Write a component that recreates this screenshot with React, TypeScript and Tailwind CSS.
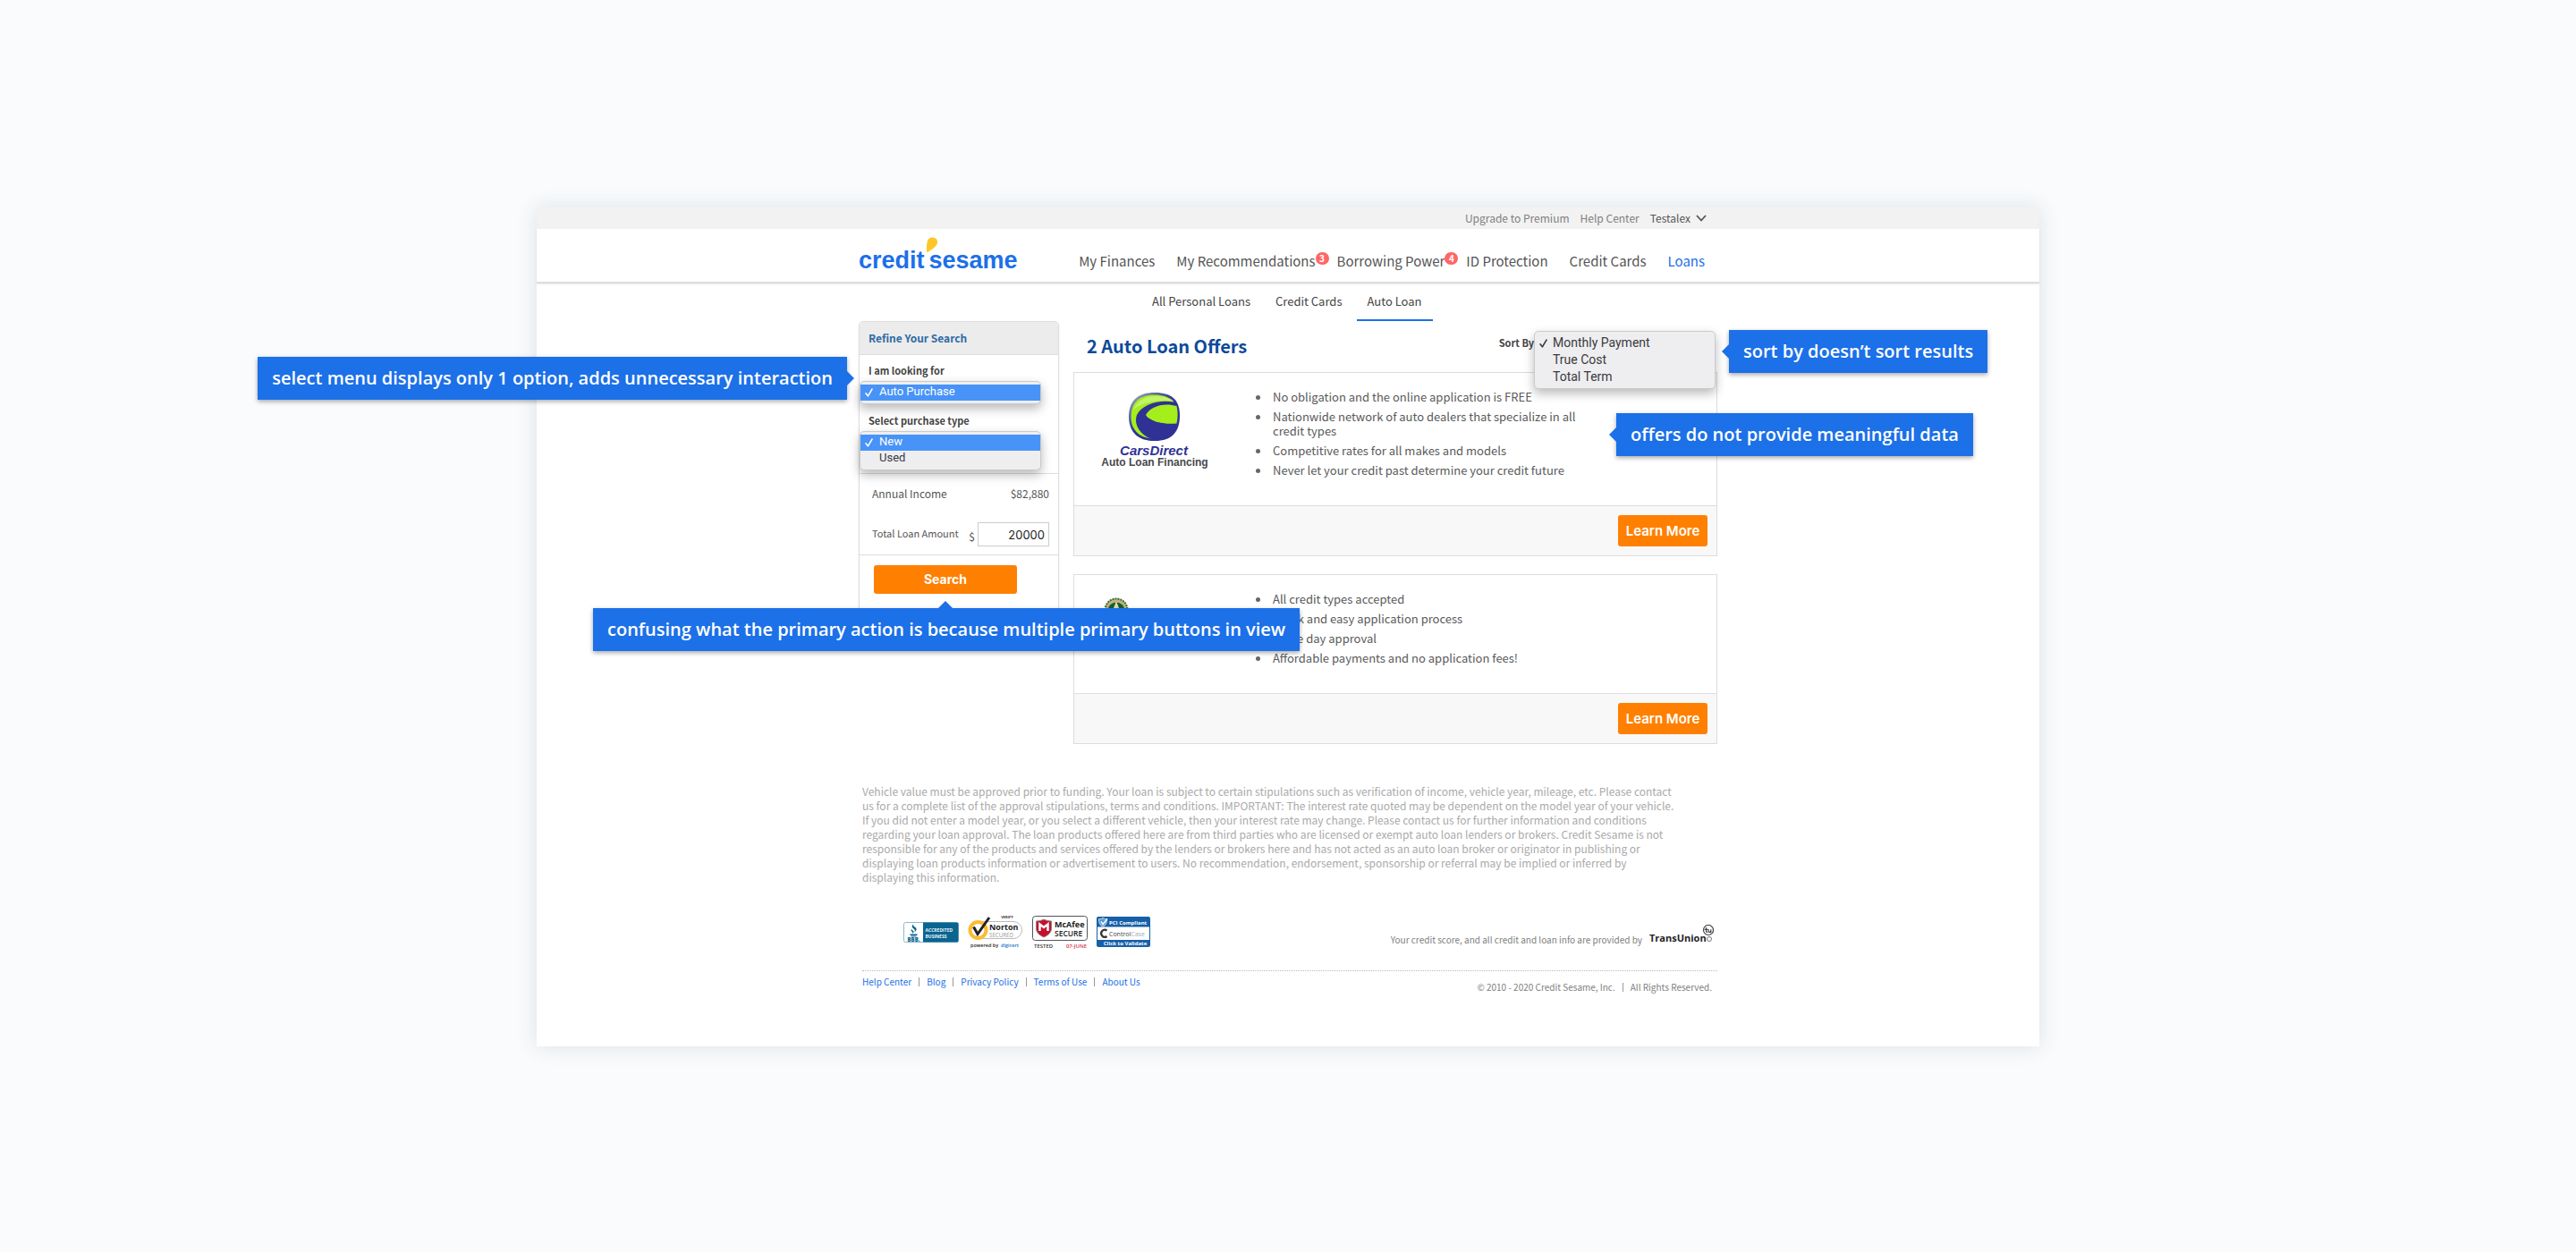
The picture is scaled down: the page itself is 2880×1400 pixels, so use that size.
import type { ReactNode } from "react";

function Callout({
  children,
  place,
  arrow,
}: {
  children: ReactNode;
  place: string;
  arrow: "left" | "right" | "top";
}) {
  const arrows = {
    left: "right-full top-4 h-4 w-2 [clip-path:polygon(100%_0,0_50%,100%_100%)]",
    right: "left-full top-4 h-4 w-2 [clip-path:polygon(0_0,100%_50%,0_100%)]",
    top: "bottom-full left-[386px] h-2 w-4 [clip-path:polygon(0_100%,50%_0,100%_100%)]",
  };
  return (
    <p
      role="note"
      className={`absolute z-20 whitespace-nowrap bg-[#1c70e8] px-4 font-['Open_Sans',sans-serif] text-xl/12 font-semibold text-white shadow-[0_2px_5px_rgba(0,0,0,0.35)] ${place}`}
    >
      {children}
      <span className={`absolute bg-[#1c70e8] ${arrows[arrow]}`} />
    </p>
  );
}

function Check({ className }: { className: string }) {
  return (
    <svg viewBox="0 0 9 10" className={`pointer-events-none absolute h-[10px] w-[9px] ${className}`} aria-hidden="true">
      <path d="M1 5.8 3.4 8.8 8 1.2" fill="none" stroke="currentColor" strokeWidth="1.6" strokeLinecap="round" strokeLinejoin="round" />
    </svg>
  );
}

const menuBox =
  "rounded-[5px] border border-[#c9cacc] bg-[#eeeef1] text-[#3a3a3c] shadow-[0_5px_12px_rgba(0,0,0,0.28)]";

function SideMenu({ id, options, list }: { id: string; options: string[]; list: string }) {
  return (
    <div className={`relative w-[203px] py-[3px] ${menuBox}`}>
      <select
        id={id}
        size={2}
        defaultValue={options[0]}
        className={`block w-full appearance-none overflow-hidden border-0 bg-transparent p-0 font-[Roboto,sans-serif] text-[13px] outline-none ${list}`}
      >
        {options.map((o) => (
          <option
            key={o}
            value={o}
            className="block h-[18px] p-0 pl-[21px] leading-[18px] checked:bg-linear-to-r checked:from-[#4893f8] checked:to-[#4893f8] checked:[-webkit-text-fill-color:white]"
          >
            {o}
          </option>
        ))}
      </select>
      <Check className="left-[5px] top-[7px] text-white" />
    </div>
  );
}

function CreditSesameLogo() {
  return (
    <a href="#" className="relative flex items-center gap-[5px] font-['Liberation_Sans',sans-serif] text-[27px] leading-8 font-bold text-[#1c70e8]">
      <span>credit</span>
      <span>sesame</span>
      <svg viewBox="0 0 14 18" className="absolute -top-[10px] left-[75px] h-[18px] w-[14px]" aria-hidden="true">
        <path d="M1.2 17.2C.8 12.600.9 7.500 2 4.300 3 1.600 5.200.4 7.800.6c3.200.2 5.400 2.300 5.300 5.300C13 9.500 7 14.300 1.200 17.200Z" fill="#ffc629" />
      </svg>
    </a>
  );
}

function CarsDirectLogo() {
  return (
    <svg viewBox="0 0 120 88" className="h-[88px] w-[120px]" role="img" aria-label="CarsDirect Auto Loan Financing">
      <defs>
        <linearGradient id="rim" x1="0" y1="0" x2="0.7" y2="0.8">
          <stop offset="0" stopColor="#b5bcc8" />
          <stop offset="0.35" stopColor="#5a66a0" />
          <stop offset="0.65" stopColor="#2f3294" />
        </linearGradient>
      </defs>
      <path d="M60 3C80 3 88 12 88 29C88 47 79 57 60 57C41 57 31 47 31 30C31 12 41 3 60 3Z" fill="url(#rim)" />
      <path d="M60 5.500C77 5.500 85.500 14 85.500 29C85.500 45 77 54.500 60 54.500C43 54.500 33.500 45 33.500 30C33.500 14 43 5.500 60 5.500Z" fill="#a4ee1c" />
      <path d="M83 14C66 10 46 16 40 28C36 39 44 51 58 55.500C76 56 87 46 87 29L86 20Z" fill="#2f3294" />
      <path d="M84.500 18C70 13.500 54 19 50 28C54 35 70 39 84.500 37.500C86 31 86 24 84.500 18Z" fill="#a4ee1c" />
      <path d="M36 22C40 12 50 7 61 7C72 7 80 10 82 13C64 10 46 14 36 22Z" fill="#d9f5a0" opacity="0.6" />
      <text x="59" y="73" textAnchor="middle" fill="#2f3294" fontFamily="Liberation Sans" fontSize="15" fontStyle="italic" fontWeight="700">
        CarsDirect
      </text>
      <text x="60" y="85" textAnchor="middle" fill="#484848" fontFamily="Liberation Sans" fontSize="12" fontWeight="700">
        Auto Loan Financing
      </text>
    </svg>
  );
}

function SealLogo() {
  return (
    <svg viewBox="0 0 28 28" className="h-7 w-7" role="img" aria-label="Lender seal">
      <circle cx="14" cy="14" r="12.500" fill="#c9b273" stroke="#2c6b45" strokeWidth="2" strokeDasharray="2 1" />
      <circle cx="14" cy="15" r="9.500" fill="#12613a" />
      <path d="M14 5 7 24h4l2-12h2l2 12h4Z" fill="#f4f1e4" />
      <path d="M14 4.500 17 12h-6Z" fill="#e6d9a8" />
    </svg>
  );
}

function OfferCard({ logo, points, children }: { logo: ReactNode; points: string[]; children?: ReactNode }) {
  return (
    <article className="relative border border-[#ddd] bg-white">
      <div className="flex pt-[19px] pb-[31px]">
        <div className="h-px w-[203px] shrink-0 pl-[30px]">{logo}</div>
        <ul className="flex max-w-[372px] flex-col gap-1.5 text-[13px] leading-4 text-[#5a5a5a]">
          {points.map((p) => (
            <li key={p} className="flex gap-[14px]">
              <span className="mt-[6px] h-[5px] w-[5px] shrink-0 rounded-full bg-[#666]" />
              <span>{p}</span>
            </li>
          ))}
        </ul>
      </div>
      <div className="flex h-14 items-center justify-end border-t border-[#ddd] bg-[#f8f8f8] pr-[10px]">
        <button type="button" className="h-[35px] w-[100px] rounded-[3px] bg-[#ff8000] pt-0.5 font-[Inter,sans-serif] text-[15px] font-semibold text-white">
          Learn More
        </button>
      </div>
      {children}
    </article>
  );
}

function TrustBadges() {
  const f = "Open Sans";
  return (
    <div className="flex items-center gap-[10px]">
      <svg viewBox="0 0 62 23" className="h-[23px] w-[62px]" role="img" aria-label="BBB Accredited Business">
        <rect x="0.500" y="0.500" width="61" height="22" rx="2" fill="#fff" stroke="#8fb9cc" />
        <path d="M22 .5h38a1.500 1.500 0 0 1 1.500 1.500v19a1.500 1.500 0 0 1-1.500 1.500H22Z" fill="#0a6490" />
        <path d="M11 2.500c-3 3 0 4.500 1.500 6 .8 1 .3 2-.6 3 3.400-1.800 3.300-4 1.500-5.500C12 4.800 10.600 4.200 11 2.500ZM9 7.500c-1.300 2 .6 3 1.300 4.200.3.600 0 1.100-.3 1.600 2-1 1.900-2.700.7-3.700C9.900 9 9 8.500 9 7.500ZM7 13.500h9l-1 1.500H8ZM8.500 15.500h6v1h-6Z" fill="#0a6490" />
        <text x="11.500" y="22" textAnchor="middle" fontFamily={f} fontSize="6" fontWeight="800" fill="#0a6490">BBB.</text>
        <text x="24.500" y="11" fontFamily={f} fontSize="5" fontWeight="700" fill="#e8f3f8">ACCREDITED</text>
        <text x="24.500" y="17.500" fontFamily={f} fontSize="5" fontWeight="700" fill="#e8f3f8">BUSINESS</text>
      </svg>
      <svg viewBox="0 0 62 38" className="h-[38px] w-[62px]" role="img" aria-label="Norton Secured, powered by digicert">
        <text x="44" y="4" textAnchor="middle" fontFamily={f} fontSize="4" fontWeight="700" fill="#333">VERIFY</text>
        <path d="M17 7.500h34a9.500 9.500 0 0 1 0 19H17" fill="#fff" stroke="#bbb" />
        <circle cx="11.500" cy="17" r="9" fill="#fff" stroke="#fdbb30" strokeWidth="4" />
        <path d="m6.500 13.500 4.500 8L24 3" fill="none" stroke="#222" strokeWidth="3" strokeLinejoin="miter" />
        <text x="24" y="17" fontFamily={f} fontSize="9" fontWeight="700" fill="#222">Norton</text>
        <text x="24" y="24.500" fontFamily={f} fontSize="6.200" fill="#999">SECURED</text>
        <text x="3" y="36" fontFamily={f} fontSize="5.500" fontWeight="600" fill="#222">powered by</text>
        <text x="37" y="36" fontFamily={f} fontSize="5.500" fontWeight="600" fill="#1c70c8">digicert</text>
      </svg>
      <svg viewBox="0 0 62 38" className="h-[38px] w-[62px]" role="img" aria-label="McAfee Secure, tested 07-June">
        <rect x="0.500" y="1.500" width="61" height="27" rx="3" fill="#fff" stroke="#555" />
        <path d="M4.500 7c3.500 0 6-.8 8.500-2 2.500 1.200 5 2 8.500 2v8c0 5-4 8-8.500 10-4.500-2-8.500-5-8.500-10Z" fill="#c8102e" stroke="#888" />
        <path d="M8.500 18V10.500l4.500 3.500 4.500-3.500V18" fill="none" stroke="#fff" strokeWidth="2.500" />
        <text x="25" y="14" fontFamily={f} fontSize="9" fontWeight="700" fill="#222">McAfee</text>
        <text x="25" y="24" fontFamily={f} fontSize="8.500" fontWeight="600" fill="#222">SECURE</text>
        <text x="2" y="37" fontFamily={f} fontSize="6" fontWeight="600" fill="#333">TESTED</text>
        <text x="61" y="37" textAnchor="end" fontFamily={f} fontSize="6" fontWeight="600" fill="#d8304a">07-JUNE</text>
      </svg>
      <svg viewBox="0 0 60 34" className="h-[34px] w-[60px]" role="img" aria-label="PCI Compliant, ControlCase, click to validate">
        <rect width="60" height="34" rx="2" fill="#1560a8" />
        <rect x="1" y="11.500" width="58" height="14.500" fill="#fff" />
        <path d="M7 1.500c2 1.200 3.500 1.200 4.500 1.200 0 4-1 7-4.500 8.500C3.500 9.700 2.500 6.700 2.500 2.700 4 2.700 5.500 2.500 7 1.500Z" fill="#5c97cf" stroke="#cfe2f4" />
        <path d="m5 5.500 2 3 5-6" fill="none" stroke="#fff" strokeWidth="1.400" />
        <text x="14" y="8.500" fontFamily={f} fontSize="6" fontWeight="700" fill="#fff">PCI Compliant</text>
        <path d="M11.500 15.500a4 4 0 1 0 0 6.500" fill="none" stroke="#333" strokeWidth="2.200" />
        <text x="14" y="21.500" fontFamily={f} fontSize="7" fill="#444">Control<tspan fill="#aaa">Case</tspan></text>
        <text x="32" y="32" textAnchor="middle" fontFamily={f} fontSize="6" fontWeight="700" fill="#fff">Click to Validate</text>
      </svg>
    </div>
  );
}

function TransUnionLogo() {
  return (
    <svg viewBox="0 0 72 24" className="h-6 w-[72px]" role="img" aria-label="TransUnion">
      <text x="0" y="19" fontFamily="Open Sans" fontSize="11" fontWeight="700" fill="#222">TransUnion</text>
      <circle cx="66" cy="6" r="5.500" fill="#fff" stroke="#444" strokeWidth="1.200" />
      <path d="M63.500 3.500v3.800q0 1.200 1.300.9M62 5.200h3M66 5.200v2q0 1.300 1.200 1.200t1.600-1.400V5.200v3.200" fill="none" stroke="#333" strokeWidth="1.100" strokeLinecap="round" />
      <circle cx="67" cy="16" r="2.500" fill="none" stroke="#777" />
    </svg>
  );
}

const nav = [
  { label: "My Finances" },
  { label: "My Recommendations", badge: 3 },
  { label: "Borrowing Power", badge: 4 },
  { label: "ID Protection" },
  { label: "Credit Cards" },
  { label: "Loans", active: true },
];

const disclaimer = [
  "Vehicle value must be approved prior to funding. Your loan is subject to certain stipulations such as verification of income, vehicle year, mileage, etc. Please contact",
  "us for a complete list of the approval stipulations, terms and conditions. IMPORTANT: The interest rate quoted may be dependent on the model year of your vehicle.",
  "If you did not enter a model year, or you select a different vehicle, then your interest rate may change. Please contact us for further information and conditions",
  "regarding your loan approval. The loan products offered here are from third parties who are licensed or exempt auto loan lenders or brokers. Credit Sesame is not",
  "responsible for any of the products and services offered by the lenders or brokers here and has not acted as an auto loan broker or originator in publishing or",
  "displaying loan products information or advertisement to users. No recommendation, endorsement, sponsorship or referral may be implied or inferred by",
  "displaying this information.",
];

const footerLinks = ["Help Center", "Blog", "Privacy Policy", "Terms of Use", "About Us"];

export default function App() {
  return (
    <div className="min-h-screen overflow-x-hidden bg-[#f9fbfd] py-[232px] font-['Noto_Sans_CJK_SC',sans-serif] text-[#555]">
      <div className="mx-auto w-full max-w-[1680px] bg-white pb-[58px] shadow-[0_0_22px_rgba(60,80,80,0.14)]">
        <div className="bg-[#f2f2f2]">
          <div className="mx-auto flex h-6 max-w-[960px] items-center justify-end gap-3 pr-3 text-xs text-[#808080]">
            <a href="#">Upgrade to Premium</a>
            <a href="#">Help Center</a>
            <button type="button" className="flex items-center gap-1.5 text-[#555]">
              Testalex
              <svg viewBox="0 0 12 8" className="h-2 w-3" aria-hidden="true">
                <path d="m1 1 5 5.500L11 1" fill="none" stroke="#555" strokeWidth="1.800" />
              </svg>
            </button>
          </div>
        </div>

        <header className="border-b-2 border-[#ddd] shadow-[0_1px_2px_rgba(0,0,0,0.08)]">
          <div className="mx-auto flex h-[59px] max-w-[960px] items-center justify-between pt-[10px] pr-[14px]">
            <CreditSesameLogo />
            <nav className="flex gap-6 pt-1 text-[15px]">
              {nav.map((n) => (
                <a key={n.label} href="#" className={n.active ? "relative text-[#1c70e8]" : "relative"}>
                  {n.label}
                  {n.badge && (
                    <span className="absolute top-px left-full h-[14px] w-[15px] rounded-full bg-[#ff6666] text-center text-[10px] leading-[14px] font-bold text-white">
                      {n.badge}
                    </span>
                  )}
                </a>
              ))}
            </nav>
          </div>
        </header>

        <div className="mx-auto max-w-[960px]">
          <nav className="ml-[316px] flex gap-1 text-[13px] leading-[40px] text-[#444]">
            <a href="#" className="border-b-2 border-transparent px-3">All Personal Loans</a>
            <a href="#" className="border-b-2 border-transparent px-3">Credit Cards</a>
            <a href="#" className="border-b-2 border-[#1c70e8] px-3">Auto Loan</a>
          </nav>

          <main className="flex items-start gap-4">
            <aside className="w-56 shrink-0 rounded-t-[5px] border border-[#ddd] bg-white shadow-[0_1px_3px_rgba(0,0,0,0.06)]">
              <h2 className="rounded-t-[4px] border-b border-[#ddd] bg-[#ececec] px-[10px] text-xs leading-9 font-bold text-[#2f6ba5]">
                Refine Your Search
              </h2>
              <form>
                <div className="border-b border-[#ddd] pt-[9px] pb-[3px] text-[11px] leading-4 font-bold text-[#444]">
                  <label htmlFor="looking" className="block px-[10px]">I am looking for</label>
                  <div className="relative mt-1">
                    <SideMenu id="looking" options={["Auto Purchase"]} list="h-[18px]" />
                    <Callout place="right-full mr-[14px] -top-[27px]" arrow="right">
                      select menu displays only 1 option, adds unnecessary interaction
                    </Callout>
                  </div>
                  <label htmlFor="ptype" className="mt-[10px] block px-[10px]">Select purchase type</label>
                  <div className="mt-1">
                    <SideMenu id="ptype" options={["New", "Used"]} list="h-9" />
                  </div>
                </div>
                <div className="border-b border-[#ddd] pt-[14px] pr-[10px] pb-[9px] pl-[14px]">
                  <div className="flex justify-between text-xs/4">
                    <span>Annual Income</span>
                    <span>$82,880</span>
                  </div>
                  <div className="mt-6 flex items-center text-[11px] leading-4">
                    <label htmlFor="amount" className="mr-auto pb-1">Total Loan Amount</label>
                    <span className="mr-[3px] pt-1 text-xs/4">$</span>
                    <input
                      id="amount"
                      defaultValue="20000"
                      className="h-[27px] w-20 rounded-none border border-[#ccc] pr-1 text-right font-[Inter,sans-serif] text-[13px] text-[#222]"
                    />
                  </div>
                </div>
                <div className="relative mt-[11px] mb-[50px] ml-4 w-40">
                  <button type="submit" className="block h-8 w-full rounded-[3px] bg-[#ff8000] font-[Inter,sans-serif] text-sm font-bold text-white">
                    Search
                  </button>
                  <Callout place="top-full mt-4 -left-[314px]" arrow="top">
                    confusing what the primary action is because multiple primary buttons in view
                  </Callout>
                </div>
              </form>
            </aside>

            <section className="min-w-0 flex-1">
              <div className="flex h-[57px] justify-between pr-[2px] pl-[15px]">
                <h1 className="pt-[14px] text-xl/7 font-bold text-[#0d4a9b]">2 Auto Loan Offers</h1>
                <div className="flex">
                  <label htmlFor="sort" className="mt-4 text-[11px] leading-4 font-bold text-[#444]">Sort By</label>
                  <div className="relative w-[203px]">
                    <div className={`absolute top-[11px] left-0 z-10 w-full pt-1 pb-0.5 ${menuBox}`}>
                      <select
                        id="sort"
                        size={3}
                        defaultValue="Monthly Payment"
                        className="block h-[57px] w-full appearance-none overflow-hidden border-0 bg-transparent p-0 font-[Roboto,sans-serif] text-sm outline-none"
                      >
                        {["Monthly Payment", "True Cost", "Total Term"].map((o) => (
                          <option
                            key={o}
                            value={o}
                            className="block h-[19px] p-0 pl-5 leading-[19px] checked:bg-linear-to-r checked:from-[#eeeef1] checked:to-[#eeeef1] checked:[-webkit-text-fill-color:#3a3a3c]"
                          >
                            {o}
                          </option>
                        ))}
                      </select>
                      <Check className="top-2 left-[5px]" />
                    </div>
                    <Callout place="left-full ml-[15px] top-[10px]" arrow="left">
                      sort by doesn’t sort results
                    </Callout>
                  </div>
                </div>
              </div>

              <div className="flex flex-col gap-5">
                <OfferCard
                  logo={<CarsDirectLogo />}
                  points={[
                    "No obligation and the online application is FREE",
                    "Nationwide network of auto dealers that specialize in all credit types",
                    "Competitive rates for all makes and models",
                    "Never let your credit past determine your credit future",
                  ]}
                >
                  <Callout place="left-[606px] top-[45px]" arrow="left">
                    offers do not provide meaningful data
                  </Callout>
                </OfferCard>
                <OfferCard
                  logo={<div className="pt-[6px] pl-[3px]"><SealLogo /></div>}
                  points={[
                    "All credit types accepted",
                    "Quick and easy application process",
                    "Same day approval",
                    "Affordable payments and no application fees!",
                  ]}
                />
              </div>
            </section>
          </main>

          <p className="mt-[45px] pl-1 text-xs/4 text-[#aaa]">
            {disclaimer.map((line) => (
              <span key={line} className="block">{line}</span>
            ))}
          </p>

          <footer className="pl-1">
            <div className="mt-[34px] flex items-center justify-between border-b border-dotted border-[#bbb] pr-1 pb-6">
              <div className="pl-[46px]">
                <TrustBadges />
              </div>
              <div className="flex items-center gap-2 pt-2 text-[10px] text-[#808080]">
                <p className="pt-2">Your credit score, and all credit and loan info are provided by</p>
                <TransUnionLogo />
              </div>
            </div>
            <div className="mt-1 flex items-start justify-between pr-[6px] text-[10px] leading-4">
              <ul className="flex gap-2 text-[#1c70e8]">
                {footerLinks.map((l, i) => (
                  <li key={l} className="flex items-center gap-2">
                    {i > 0 && <span className="h-[10px] w-px bg-[#999]" />}
                    <a href="#">{l}</a>
                  </li>
                ))}
              </ul>
              <p className="flex items-center gap-2 pt-[6px] text-[#808080]">
                © 2010 - 2020 Credit Sesame, Inc.
                <span className="h-[10px] w-px bg-[#999]" />
                All Rights Reserved.
              </p>
            </div>
          </footer>
        </div>
      </div>
    </div>
  );
}
